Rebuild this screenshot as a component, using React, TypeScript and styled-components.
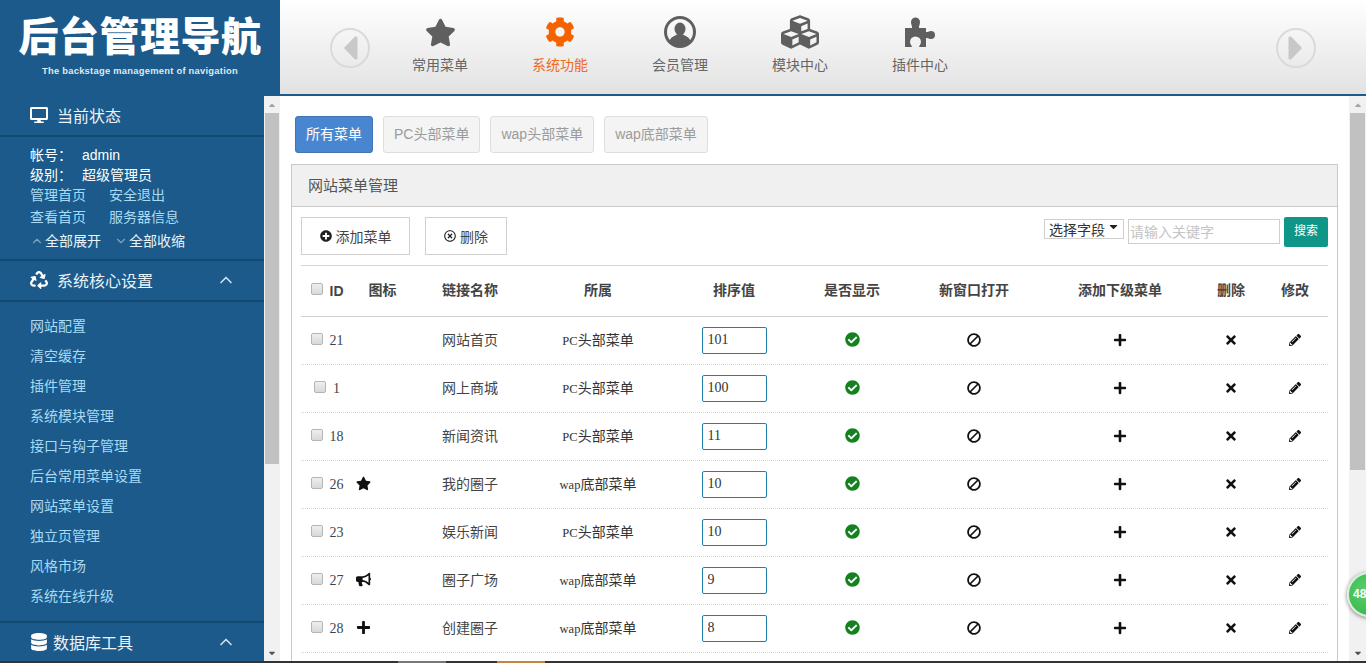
import React from "react";
import styled, { createGlobalStyle } from "styled-components";
import {
  FaBan,
  FaBullhorn,
  FaCaretDown,
  FaCaretLeft,
  FaCaretRight,
  FaCaretUp,
  FaCheckCircle,
  FaCog,
  FaCubes,
  FaDatabase,
  FaDesktop,
  FaPencilAlt,
  FaPlus,
  FaPlusCircle,
  FaRecycle,
  FaRegTimesCircle,
  FaStar,
  FaTimes,
} from "react-icons/fa";
import { FiChevronDown, FiChevronUp } from "react-icons/fi";

const blue = "#1b5a8a";
const font = '"Liberation Sans", "Noto Sans CJK SC", sans-serif';
const cols = "52px 59px 116px 140px 132px 104px 140px 152px 70px 58px";

const GlobalStyle = createGlobalStyle`
  html, body {
    margin: 0;
    height: 100%;
    overflow: hidden;
    background: #fff;
  }
  * {
    box-sizing: border-box;
  }
`;

const Page = styled.div`
  height: 663px;
  display: flex;
  flex-direction: column;
  font-family: ${font};
  font-size: 14px;
  color: #333;
  position: relative;
  overflow: hidden;
`;

const Header = styled.div`
  height: 96px;
  flex: none;
  display: flex;
  border-bottom: 2px solid ${blue};
  background: linear-gradient(#fff, #e2e2e2);
`;

const Logo = styled.div`
  width: 280px;
  flex: none;
  background: ${blue};
  color: #fff;
  display: flex;
  flex-direction: column;
  align-items: center;
  padding-top: 9px;
`;

const LogoTitle = styled.div`
  font-family: "Noto Sans CJK SC", sans-serif;
  font-size: 40px;
  line-height: 50px;
  font-weight: 900;
  letter-spacing: 0.5px;
  white-space: nowrap;
`;

const LogoSub = styled.div`
  font-size: 9.4px;
  font-weight: 700;
  line-height: 12px;
  margin-top: 6px;
  letter-spacing: 0.25px;
  color: #dfe9f1;
`;

const TopNav = styled.div`
  flex: 1;
  display: flex;
  align-items: flex-start;
  padding: 0 50px;
`;

const ArrowBtn = styled.div`
  width: 40px;
  height: 40px;
  flex: none;
  margin-top: 28px;
  border-radius: 50%;
  border: 2px solid #dadada;
  color: #c8c8c8;
  display: flex;
  align-items: center;
  justify-content: center;
  font-size: 40px;
`;

const NavItems = styled.div`
  flex: 1;
  display: flex;
  padding-left: 10px;
`;

const NavItem = styled.div<{ $active?: boolean }>`
  width: 120px;
  display: flex;
  flex-direction: column;
  align-items: center;
  padding-top: 14px;
  color: ${(p) => (p.$active ? "#f06a1c" : "#666")};
  font-size: 14px;
`;

const NavIcon = styled.div<{ $active?: boolean; $size: number }>`
  height: 36px;
  display: flex;
  align-items: center;
  color: ${(p) => (p.$active ? "#f56300" : "#5f5f5f")};
  font-size: ${(p) => p.$size}px;
`;

const NavLabel = styled.div`
  line-height: 20px;
  margin-top: 5px;
`;

const Body = styled.div`
  flex: 1;
  min-height: 0;
  display: flex;
`;

const Sidebar = styled.div`
  width: 264px;
  flex: none;
  background: ${blue};
  color: #fff;
  overflow: hidden;
`;

const SideHead = styled.div`
  height: 41px;
  display: flex;
  align-items: center;
  padding: 0 28px 2px 30px;
  font-size: 16px;
  color: #e9f3fa;
  border-bottom: 2px solid #134a74;
`;

const SideHeadIcon = styled.span<{ $w?: number }>`
  display: flex;
  width: ${(p) => p.$w ?? 27}px;
  font-size: 18px;
  color: #fff;
`;

const HeadArrow = styled(FiChevronUp)`
  margin-left: auto;
  font-size: 20px;
  color: #cfe0ec;
`;

const InfoBlock = styled.div`
  height: 124px;
  padding: 8px 30px 0;
  border-bottom: 2px solid #134a74;
`;

const InfoRow = styled.div`
  line-height: 20px;
  display: flex;
  color: #fff;
`;

const InfoKey = styled.span`
  width: 52px;
`;

const LinkRow = styled.div<{ $h: number }>`
  line-height: ${(p) => p.$h}px;
  display: flex;
  gap: 23px;
  color: #a9daf5;
`;

const ToggleRow = styled.div`
  display: flex;
  align-items: center;
  line-height: 24px;
  color: #e8f4fb;
`;

const ToggleIcon = styled.span`
  display: flex;
  color: #7fa6c2;
  font-size: 14px;
  margin-right: 1px;
  & + span {
    margin-right: 13px;
  }
`;

const SideList = styled.div`
  height: 321px;
  padding-top: 9px;
  border-bottom: 2px solid #134a74;
`;

const SideLink = styled.div`
  height: 30px;
  line-height: 30px;
  padding-left: 30px;
  color: #a9daf5;
`;

const Scrollbar = styled.div<{ $w: number; $thumb: number }>`
  width: ${(p) => p.$w}px;
  flex: none;
  background: #f1f1f1;
  display: flex;
  flex-direction: column;
  align-items: center;
  color: #a3a3a3;
  font-size: 10px;
  & > div {
    height: ${(p) => p.$thumb}px;
    width: 100%;
    flex: none;
    margin-bottom: auto;
    background: #c1c1c1;
    border-left: 1px solid #f1f1f1;
    border-right: 1px solid #f1f1f1;
  }
`;

const ScrollBtn = styled.span<{ $dark?: boolean }>`
  height: 17px;
  flex: none;
  display: flex;
  align-items: center;
  color: ${(p) => (p.$dark ? "#505050" : "#a3a3a3")};
`;

const Main = styled.div`
  flex: 1;
  min-width: 0;
  padding: 20px 11px 0 15px;
  overflow: hidden;
`;

const Tabs = styled.div`
  display: flex;
  gap: 10px;
  margin-bottom: 11px;
`;

const Tab = styled.div<{ $active?: boolean }>`
  height: 37px;
  line-height: 35px;
  padding: 0 10px;
  border-radius: 3px;
  border: 1px solid ${(p) => (p.$active ? "#3f74b5" : "#dedede")};
  background: ${(p) => (p.$active ? "#4a86cf" : "#f4f4f4")};
  color: ${(p) => (p.$active ? "#fff" : "#9b9b9b")};
`;

const Panel = styled.div`
  margin-left: -4px;
  border: 1px solid #c9c9c9;
  border-bottom: none;
  padding: 0 1px;
  height: 600px;
`;

const PanelTitle = styled.div`
  height: 42px;
  line-height: 41px;
  margin: 0 -1px;
  padding-left: 16px;
  font-size: 15px;
  color: #555;
  background: #f0f0f0;
  border-bottom: 1px solid #c9c9c9;
`;

const Toolbar = styled.div`
  height: 59px;
  margin: 0 8px;
  display: flex;
  align-items: flex-start;
  padding-top: 10px;
  border-bottom: 1px solid #d5d5d5;
`;

const ToolBtn = styled.div<{ $w: number }>`
  width: ${(p) => p.$w}px;
  height: 38px;
  margin-right: 15px;
  border: 1px solid #d0d0d0;
  display: flex;
  align-items: center;
  justify-content: center;
  gap: 4px;
  font-size: 14px;
  color: #444;
  & svg {
    color: #222;
    font-size: 12px;
  }
`;

const SearchBox = styled.div`
  margin-left: auto;
  display: flex;
  align-items: flex-start;
`;

const FieldSelect = styled.div`
  width: 80px;
  height: 20px;
  margin-top: 2px;
  border: 1px solid #cfcfcf;
  padding-left: 4px;
  line-height: 20px;
  font-size: 14px;
  color: #333;
  position: relative;
`;

const SelectCaret = styled(FaCaretDown)`
  position: absolute;
  right: 3px;
  top: 0;
  font-size: 13px;
  color: #222;
`;

const KeywordInput = styled.input`
  width: 152px;
  height: 25px;
  margin: 2px 4px 0;
  padding: 0 1px;
  border: 1px solid #cfcfcf;
  outline: none;
  font: 14px ${font};
  &::placeholder {
    color: #c4c4c4;
  }
`;

const SearchBtn = styled.div`
  width: 44px;
  height: 30px;
  line-height: 29px;
  text-align: center;
  font-size: 12px;
  color: #fff;
  background: #0f9688;
  border-radius: 2px;
`;

const GridRow = styled.div<{ $head?: boolean }>`
  display: grid;
  grid-template-columns: ${cols};
  align-items: center;
  justify-items: center;
  margin: 0 8px;
  height: ${(p) => (p.$head ? 51 : 48)}px;
  border-bottom: 1px ${(p) => (p.$head ? "solid #d0d0d0" : "dotted #d4d4d4")};
  font-weight: ${(p) => (p.$head ? 700 : 400)};
  font-size: 14px;
  color: #444;
  & > div {
    margin-top: -4px;
  }
`;

const IdCell = styled.span`
  display: flex;
  align-items: center;
  gap: 7px;
`;

const CheckBox = styled.span`
  width: 12px;
  height: 12px;
  margin-top: -4px;
  border: 1px solid #b4b4b4;
  border-radius: 2px;
  background: linear-gradient(#efefef, #d8d8d8);
`;

const IdText = styled.span`
  font-family: "Liberation Serif", serif;
  font-size: 14px;
`;

const IconCell = styled.span`
  justify-self: start;
  padding-left: 3px;
  margin-top: -2px;
  display: flex;
  font-size: 15px;
  color: #111;
`;

const Group = styled.div`
  font-size: 14px;
  color: #333;
  white-space: nowrap;
`;

const GroupTag = styled.span`
  font-family: "Liberation Serif", serif;
  font-size: 12.5px;
`;

const SortInput = styled.input`
  width: 65px;
  height: 27px;
  margin-top: -1px;
  border: 1px solid #1f7fa8;
  border-radius: 2px;
  padding: 0 5px;
  outline: none;
  font: 14px "Liberation Serif", serif;
  color: #333;
`;

const ActionIcon = styled.span<{ $color?: string; $size?: number }>`
  display: flex;
  font-size: ${(p) => p.$size ?? 14}px;
  color: ${(p) => p.$color ?? "#111"};
  margin-top: -2px;
`;

const BanIcon = styled(FaBan)`
  transform: scaleX(-1);
`;

const Badge = styled.div`
  position: absolute;
  left: 1347px;
  top: 572px;
  width: 45px;
  height: 45px;
  border-radius: 50%;
  background: radial-gradient(circle at 40% 40%, #58cf68, #31b14a);
  border: 2px solid #d8efdc;
  box-shadow: 0 1px 4px rgba(0, 0, 0, 0.5);
  color: #fff;
  font-size: 12px;
  font-weight: 700;
  line-height: 41px;
  padding-left: 4px;
`;

const BottomStrip = styled.div`
  height: 2px;
  flex: none;
  background: linear-gradient(
    to right,
    #333 0,
    #333 398px,
    #777 398px,
    #777 446px,
    #333 446px,
    #333 497px,
    #c8843c 497px,
    #c8843c 545px,
    #333 545px
  );
`;

const UserIcon = () => (
  <svg width="32" height="32" viewBox="0 0 32 32" fill="currentColor">
    <circle cx="16" cy="16" r="14.5" fill="none" stroke="currentColor" strokeWidth="3" />
    <ellipse cx="16" cy="13" rx="5.5" ry="6.5" />
    <path d="M5.5 25C7 20.5 11 20 13 18.5h6c2 1.500 6 2 7.500 6.500A13 13 0 0 1 5.500 25Z" />
  </svg>
);

const PuzzleIcon = () => (
  <svg width="30" height="30" viewBox="0 0 30 30" fill="currentColor">
    <path d="M0 11H7C7.500 9 6 8 6 5A4.500 4.500 0 0 1 15 5C15 8 13.500 9 14 11H21V15C23 15.500 24 14 26 14A4 4 0 0 1 26 22C24 22 23 20.500 21 21V30H14C14.500 28 16 27 16 25A5.500 5.500 0 0 0 5 25C5 27 6.500 28 7 30H0Z" />
  </svg>
);

const navItems = [
  { label: "常用菜单", icon: <FaStar />, size: 31 },
  { label: "系统功能", icon: <FaCog />, size: 30, active: true },
  { label: "会员管理", icon: <UserIcon />, size: 32 },
  { label: "模块中心", icon: <FaCubes />, size: 38 },
  { label: "插件中心", icon: <PuzzleIcon />, size: 30 },
];

const sideLinks = [
  "网站配置",
  "清空缓存",
  "插件管理",
  "系统模块管理",
  "接口与钩子管理",
  "后台常用菜单设置",
  "网站菜单设置",
  "独立页管理",
  "风格市场",
  "系统在线升级",
];

const rows = [
  { id: "21", name: "网站首页", tag: "PC", group: "头部菜单", sort: "101" },
  { id: "1", name: "网上商城", tag: "PC", group: "头部菜单", sort: "100" },
  { id: "18", name: "新闻资讯", tag: "PC", group: "头部菜单", sort: "11" },
  { id: "26", name: "我的圈子", tag: "wap", group: "底部菜单", sort: "10", icon: <FaStar /> },
  { id: "23", name: "娱乐新闻", tag: "PC", group: "头部菜单", sort: "10" },
  { id: "27", name: "圈子广场", tag: "wap", group: "底部菜单", sort: "9", icon: <FaBullhorn /> },
  { id: "28", name: "创建圈子", tag: "wap", group: "底部菜单", sort: "8", icon: <FaPlus /> },
];

export default function App() {
  return (
    <Page>
      <GlobalStyle />
      <Header>
        <Logo>
          <LogoTitle>后台管理导航</LogoTitle>
          <LogoSub>The backstage management of navigation</LogoSub>
        </Logo>
        <TopNav>
          <ArrowBtn>
            <FaCaretLeft />
          </ArrowBtn>
          <NavItems>
            {navItems.map((n) => (
              <NavItem key={n.label} $active={n.active}>
                <NavIcon $active={n.active} $size={n.size}>
                  {n.icon}
                </NavIcon>
                <NavLabel>{n.label}</NavLabel>
              </NavItem>
            ))}
          </NavItems>
          <ArrowBtn>
            <FaCaretRight />
          </ArrowBtn>
        </TopNav>
      </Header>
      <Body>
        <Sidebar>
          <SideHead>
            <SideHeadIcon>
              <FaDesktop />
            </SideHeadIcon>
            当前状态
          </SideHead>
          <InfoBlock>
            <InfoRow>
              <InfoKey>帐号：</InfoKey>admin
            </InfoRow>
            <InfoRow>
              <InfoKey>级别：</InfoKey>超级管理员
            </InfoRow>
            <LinkRow $h={20}>
              <span>管理首页</span>
              <span>安全退出</span>
            </LinkRow>
            <LinkRow $h={24}>
              <span>查看首页</span>
              <span>服务器信息</span>
            </LinkRow>
            <ToggleRow>
              <ToggleIcon>
                <FiChevronUp />
              </ToggleIcon>
              <span>全部展开</span>
              <ToggleIcon>
                <FiChevronDown />
              </ToggleIcon>
              <span>全部收缩</span>
            </ToggleRow>
          </InfoBlock>
          <SideHead>
            <SideHeadIcon>
              <FaRecycle />
            </SideHeadIcon>
            系统核心设置
            <HeadArrow />
          </SideHead>
          <SideList>
            {sideLinks.map((l) => (
              <SideLink key={l}>{l}</SideLink>
            ))}
          </SideList>
          <SideHead>
            <SideHeadIcon $w={23}>
              <FaDatabase />
            </SideHeadIcon>
            数据库工具
            <HeadArrow />
          </SideHead>
        </Sidebar>
        <Scrollbar $w={16} $thumb={351}>
          <ScrollBtn>
            <FaCaretUp />
          </ScrollBtn>
          <div />
          <ScrollBtn $dark>
            <FaCaretDown />
          </ScrollBtn>
        </Scrollbar>
        <Main>
          <Tabs>
            <Tab $active>所有菜单</Tab>
            <Tab>PC头部菜单</Tab>
            <Tab>wap头部菜单</Tab>
            <Tab>wap底部菜单</Tab>
          </Tabs>
          <Panel>
            <PanelTitle>网站菜单管理</PanelTitle>
            <Toolbar>
              <ToolBtn $w={109}>
                <FaPlusCircle />
                添加菜单
              </ToolBtn>
              <ToolBtn $w={82}>
                <FaRegTimesCircle />
                删除
              </ToolBtn>
              <SearchBox>
                <FieldSelect>
                  选择字段
                  <SelectCaret />
                </FieldSelect>
                <KeywordInput placeholder="请输入关键字" />
                <SearchBtn>搜索</SearchBtn>
              </SearchBox>
            </Toolbar>
            <GridRow $head>
              <IdCell>
                <CheckBox />
                ID
              </IdCell>
              <div>图标</div>
              <div>链接名称</div>
              <div>所属</div>
              <div>排序值</div>
              <div>是否显示</div>
              <div>新窗口打开</div>
              <div>添加下级菜单</div>
              <div>删除</div>
              <div>修改</div>
            </GridRow>
            {rows.map((r) => (
              <GridRow key={r.id}>
                <IdCell>
                  <CheckBox />
                  <IdText>{r.id}</IdText>
                </IdCell>
                <IconCell>{r.icon}</IconCell>
                <div>{r.name}</div>
                <Group>
                  <GroupTag>{r.tag}</GroupTag>
                  {r.group}
                </Group>
                <SortInput defaultValue={r.sort} />
                <ActionIcon $color="#15801f" $size={15}>
                  <FaCheckCircle />
                </ActionIcon>
                <ActionIcon>
                  <BanIcon />
                </ActionIcon>
                <ActionIcon $size={14}>
                  <FaPlus />
                </ActionIcon>
                <ActionIcon $size={14}>
                  <FaTimes />
                </ActionIcon>
                <ActionIcon $size={12}>
                  <FaPencilAlt />
                </ActionIcon>
              </GridRow>
            ))}
          </Panel>
        </Main>
        <Scrollbar $w={17} $thumb={357}>
          <ScrollBtn>
            <FaCaretUp />
          </ScrollBtn>
          <div />
          <ScrollBtn $dark>
            <FaCaretDown />
          </ScrollBtn>
        </Scrollbar>
      </Body>
      <BottomStrip />
      <Badge>48</Badge>
    </Page>
  );
}
